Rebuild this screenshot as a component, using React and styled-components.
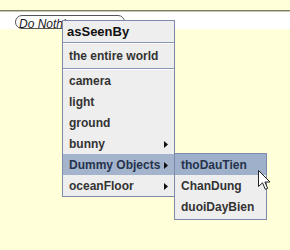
import React from "react";
import styled, { createGlobalStyle } from "styled-components";

const GlobalStyle = createGlobalStyle`
  html, body {
    margin: 0;
    padding: 0;
    background: #ffffda;
    font-family: "Liberation Sans", Arial, sans-serif;
  }
`;

const mainItems = [
  { label: "camera" },
  { label: "light" },
  { label: "ground" },
  { label: "bunny", sub: true },
  { label: "Dummy Objects", sub: true, active: true },
  { label: "oceanFloor", sub: true },
];

const dummyItems = ["thoDauTien", "ChanDung", "duoiDayBien"];

function Arrow() {
  return (
    <svg width="4" height="7" viewBox="0 0 4 7">
      <path d="M0 0 L4 3.5 L0 7 Z" fill="#111" />
    </svg>
  );
}

function Pointer() {
  return (
    <svg width="13" height="21" viewBox="0 0 13 21">
      <path
        d="M0.5 0.5 L0.5 16.5 L4.5 12.8 L7.3 19.3 L9.6 18.3 L6.9 12 L12 12 Z"
        fill="#fff"
        stroke="#222"
        strokeWidth="1"
        strokeLinejoin="miter"
      />
    </svg>
  );
}

function App() {
  return (
    <>
      <GlobalStyle />
      <Screen>
        <TopStrip />
        <Toolbar>
          <Combo>Do Nothing</Combo>
        </Toolbar>

        <PopupMenu>
          <HeaderRow $bold>asSeenBy</HeaderRow>
          <Separator />
          <HeaderRow $tall>the entire world</HeaderRow>
          <Separator />
          {mainItems.map((item) => (
            <MenuRow key={item.label} $active={item.active}>
              <span>{item.label}</span>
              {item.sub && <Arrow />}
              {item.active && (
                <SubMenu>
                  {dummyItems.map((name, i) => (
                    <SubRow key={name} $active={i === 0}>
                      {name}
                    </SubRow>
                  ))}
                </SubMenu>
              )}
            </MenuRow>
          ))}
        </PopupMenu>

        <Cursor>
          <Pointer />
        </Cursor>
      </Screen>
    </>
  );
}

const Screen = styled.div`
  position: relative;
  width: 290px;
  height: 250px;
  overflow: hidden;
  background: #ffffda;
`;

const TopStrip = styled.div`
  height: 10px;
  border-bottom: 1px solid #7d7d66;
  box-shadow: 0 1px 0 #c8c8b0;
`;

const Toolbar = styled.div`
  height: 17px;
  margin-top: 1px;
  background: #ffffff;
  padding: 3px 0 0 15px;
  box-sizing: border-box;
`;

const Combo = styled.div`
  width: 110px;
  height: 14px;
  box-sizing: border-box;
  border: 1px solid #555;
  border-radius: 7px;
  padding: 2px 0 0 3px;
  font-size: 12px;
  font-style: italic;
  line-height: 12px;
  color: #1a1a1a;
  background: #fff;
  white-space: nowrap;
`;

const PopupMenu = styled.div`
  position: absolute;
  z-index: 2;
  left: 62px;
  top: 20px;
  width: 113px;
  box-sizing: border-box;
  border: 1px solid #7b8aa8;
  background: #eeeeee;
  font-size: 12px;
  font-weight: bold;
  color: #333333;
`;

const HeaderRow = styled.div`
  height: ${(p) => (p.$tall ? 24 : 21)}px;
  line-height: ${(p) => (p.$tall ? 24 : 21)}px;
  padding-left: ${(p) => (p.$bold ? 4 : 6)}px;
  font-size: ${(p) => (p.$bold ? 13 : 12)}px;
  color: ${(p) => (p.$bold ? "#111" : "#333")};
  white-space: nowrap;
`;

const Separator = styled.div`
  height: 1px;
  background: #8898b6;
  border-bottom: 1px solid #ffffff;
`;

const MenuRow = styled.div`
  position: relative;
  display: flex;
  align-items: center;
  justify-content: space-between;
  height: 21px;
  padding: 0 6px 0 6px;
  background: ${(p) => (p.$active ? "#a4b4cc" : "transparent")};
  color: ${(p) => (p.$active ? "#26334d" : "#333333")};
  white-space: nowrap;

  svg {
    margin-top: 1px;
  }
`;

const SubMenu = styled.div`
  position: absolute;
  left: 100%;
  top: -1px;
  width: 93px;
  box-sizing: border-box;
  border: 1px solid #7b8aa8;
  padding-bottom: 2px;
  background: #eeeeee;
  color: #333333;
`;

const SubRow = styled.div`
  height: 21px;
  line-height: 22px;
  padding-left: 6px;
  background: ${(p) => (p.$active ? "#9fb0ca" : "transparent")};
  color: ${(p) => (p.$active ? "#26334d" : "#333333")};
`;

const Cursor = styled.div`
  position: absolute;
  z-index: 3;
  left: 258px;
  top: 170px;
  line-height: 0;
`;

export default App;
